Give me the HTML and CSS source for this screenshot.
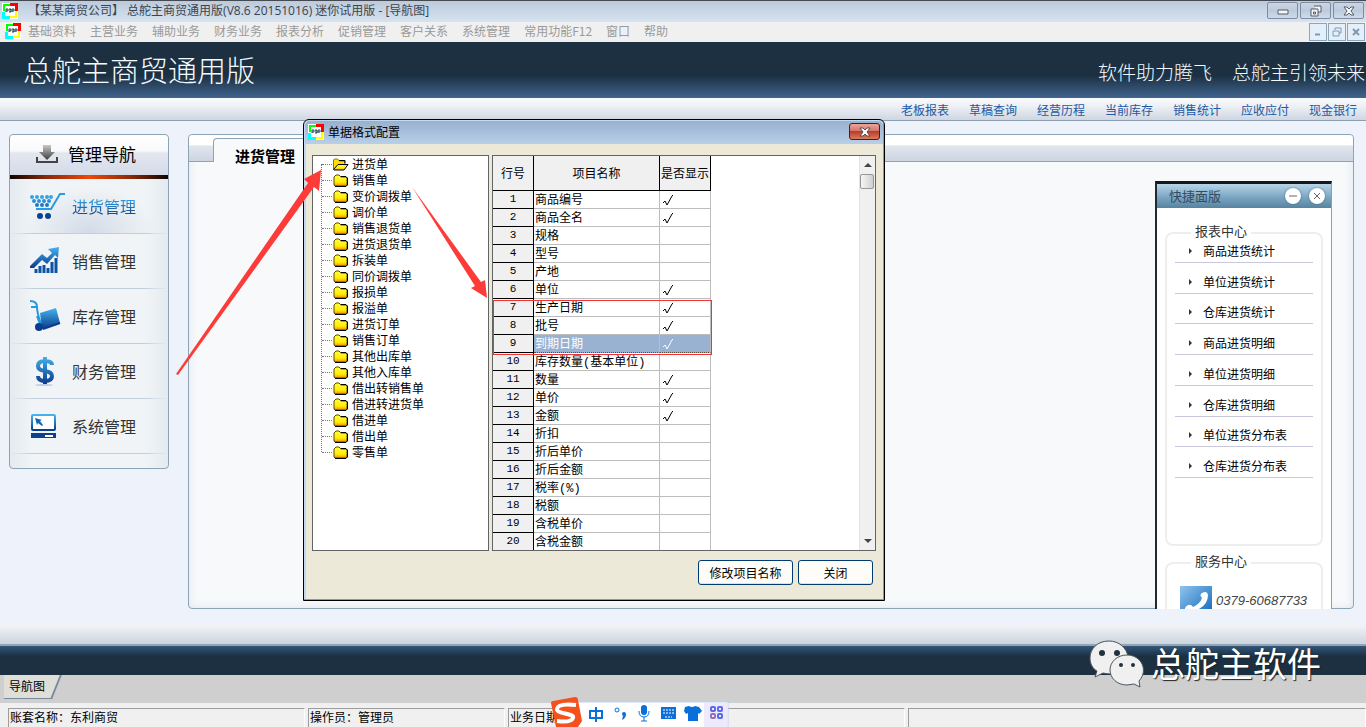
FILE: index.html
```html
<!DOCTYPE html>
<html lang="zh-CN">
<head>
<meta charset="utf-8">
<title>总舵主商贸通用版</title>
<link rel="stylesheet" href="styles.css">
</head>
<body>
<svg class="defs" aria-hidden="true">
  <defs>
    <linearGradient id="blue" x1="0" y1="0" x2="0" y2="1"><stop offset="0" stop-color="#45b4ee"/><stop offset="1" stop-color="#0a3a8c"/></linearGradient>
    <linearGradient id="dollar" gradientUnits="userSpaceOnUse" x1="0" y1="0" x2="0" y2="28"><stop offset="0" stop-color="#45b4ee"/><stop offset="1" stop-color="#0a3a8c"/></linearGradient>
    <linearGradient id="grey" x1="0" y1="0" x2="0" y2="1"><stop offset="0" stop-color="#c8c8c8"/><stop offset="1" stop-color="#3c3c3c"/></linearGradient>
    <linearGradient id="yellow" x1="0" y1="0" x2="0" y2="1"><stop offset="0" stop-color="#ffff40"/><stop offset=".65" stop-color="#ffee00"/><stop offset="1" stop-color="#f08a00"/></linearGradient>
    <symbol id="app" viewBox="0 0 16 16"><path fill="#fff" d="M0 0h16v16H0z"/><path fill="#0f0" d="M1 1h7v2H3v5H1z"/><path fill="#f00" d="M8 0h8v8h-3V3H8z"/><path fill="#ff0" d="M13 8h2v7H8v-2h5z"/><path fill="#0ff" d="M0 9h3v4h5v3H0z"/><path fill="none" stroke="#245" d="M4 9V6h2v2H4M8 6v3M7 9h2V6H7M10 9V6h2v2h-2"/></symbol>
    <symbol id="folder" viewBox="0 0 15 13"><path d="M1 3l2-2h3l2 2h5l1 1v7l-1 1H2l-1-1z" fill="url(#yellow)" stroke="#5d4a00"/><path d="M8 2.500h5l1.500 1.500v7L13 12.500H2" fill="none" stroke="#000"/></symbol>
    <symbol id="folder-open" viewBox="0 0 17 13"><path d="M1.500 11V2l1-1h3l2 2h5v2.500" fill="#ffe000" stroke="#a86a00"/><path d="M7 2.500h6v3" fill="none" stroke="#000"/><path d="M1.500 11.500L6 6.500h10L12 12H2z" fill="url(#yellow)" stroke="#000"/></symbol>
    <symbol id="restore" viewBox="0 0 14 12"><path d="M5 1h7v6H9" /><path d="M2 4h7v7H2zM4.500 7h2v2h-2z"/></symbol>
    <symbol id="tick" viewBox="0 0 11 12"><path d="M0 9l2-2 2 4 5-9 1-1" fill="none" stroke="currentColor"/></symbol>
  </defs>
</svg>

<header class="titlebar">
  <svg class="app-icon"><use href="#app"/></svg>
  <h1 class="window-title">【某某商贸公司】 总舵主商贸通用版(V8.6 20151016) 迷你试用版 - [导航图]</h1>
  <div class="window-buttons">
    <button aria-label="最小化"><svg width="14" height="12"><path d="M2 5h10v4H2z"/></svg></button>
    <button aria-label="还原"><svg width="14" height="12"><use href="#restore"/></svg></button>
    <button aria-label="关闭"><svg width="14" height="12"><path d="M2 2h3l2 2 2-2h3L9 6l3 4H9L7 8l-2 2H2l3-4z"/></svg></button>
  </div>
</header>

<nav class="menubar">
  <svg class="app-icon"><use href="#app"/></svg>
  <button>基础资料</button><button>主营业务</button><button>辅助业务</button><button>财务业务</button><button>报表分析</button><button>促销管理</button><button>客户关系</button><button>系统管理</button><button>常用功能F12</button><button>窗口</button><button>帮助</button>
  <div class="child-buttons">
    <button aria-label="最小化子窗口"><svg width="10" height="10"><path d="M2 7.500h5" stroke-width="2"/></svg></button>
    <button aria-label="还原子窗口"><svg width="10" height="10"><path d="M3 3V1h6v5H7M1 4h6v5H1z"/></svg></button>
    <button aria-label="关闭子窗口"><svg width="10" height="10"><path d="M2 2l6 6M8 2L2 8" stroke-width="2"/></svg></button>
  </div>
</nav>

<section class="banner">
  <p class="brand">总舵主商贸通用版</p>
  <p class="slogan"><span>软件助力腾飞</span><span>总舵主引领未来</span></p>
</section>

<nav class="quick-links">
  <a href="#">老板报表</a><a href="#">草稿查询</a><a href="#">经营历程</a><a href="#">当前库存</a><a href="#">销售统计</a><a href="#">应收应付</a><a href="#">现金银行</a>
</nav>

<main class="workspace">
  <aside class="sidebar">
    <h2 class="sidebar-head">
      <svg width="24" height="20"><path d="M8 1h8v7h4l-8 8-8-8h4z" fill="url(#grey)"/><path d="M2 13v5h20v-5" fill="none" stroke="#444" stroke-width="2"/></svg>
      管理导航
    </h2>
    <nav class="side-nav">
      <a class="active" href="#"><svg width="36" height="30"><g fill="#37a3e2"><circle cx="3" cy="6" r="2"/><circle cx="8" cy="6" r="2"/><circle cx="13" cy="6" r="2"/><circle cx="18" cy="6" r="2"/><circle cx="22" cy="6" r="2"/></g><g fill="#2b90d4"><circle cx="5" cy="10" r="2"/><circle cx="10" cy="10" r="2"/><circle cx="15" cy="10" r="2"/><circle cx="20" cy="10" r="2"/></g><g fill="#1f79c2"><circle cx="8" cy="14" r="2"/><circle cx="13" cy="14" r="2"/><circle cx="18" cy="14" r="2"/></g><path d="M7 18h15L31 3h5" fill="none" stroke="#299be0" stroke-width="2"/><g fill="#0a4292"><circle cx="11" cy="25" r="3"/><circle cx="19" cy="25" r="3"/></g></svg><span>进货管理</span></a>
      <a href="#"><svg width="36" height="30"><path d="M1 20L13 8l5 4 5-5-4-4 11-2-1 11-3-3-8 9-5-4-8 8H1z" fill="url(#blue)"/><path d="M7 27v-4M11 27v-7M15 27v-8M19 27v-5M23 27V16M27 27V12" stroke="#0b53a5" stroke-width="3"/></svg><span>销售管理</span></a>
      <a href="#"><svg width="36" height="34"><path d="M1 2q7 0 7 6T12 25M2 8h6M8 17l4 11" fill="none" stroke="#249be0" stroke-width="2"/><path d="M11 14l16-5 4 15-18 6z" fill="url(#blue)"/><circle cx="10" cy="28" r="4" fill="#0a3c8c"/><path d="M14 30l17-6" stroke="#0a3c8c" stroke-width="2"/></svg><span>库存管理</span></a>
      <a href="#"><svg width="36" height="30"><path d="M23 9q0-4-7-4t-7 5q0 4 7 5t7 5q0 5-7 5t-7-5M16 1v27" fill="none" stroke="url(#dollar)" stroke-width="4"/><ellipse cx="15" cy="29" rx="9" ry="1" fill="#b9cfe3"/></svg><span>财务管理</span></a>
      <a href="#"><svg width="36" height="30"><rect x="3" y="4" width="23" height="15" rx="1" fill="#fff" stroke="url(#blue)" stroke-width="2"/><path d="M6 7l7 2-2 1 3 4-1 1-4-3-1 2z" fill="#1167b5"/><path d="M2 22h25v5H2z" fill="#0b4194"/><path d="M16 25h8" stroke="#fff" stroke-width="2"/></svg><span>系统管理</span></a>
    </nav>
  </aside>

  <section class="panel">
    <div class="panel-tabs"><h2>进货管理</h2></div>
    <aside class="shortcut">
      <header class="shortcut-head"><h3>快捷面版</h3>
        <div class="shortcut-buttons"><button aria-label="收起"><svg width="12" height="12"><path d="M2 6h8"/></svg></button><button aria-label="关闭面版"><svg width="12" height="12"><path d="M3 3l6 6M9 3L3 9"/></svg></button></div>
      </header>
      <section class="group reports"><h4>报表中心</h4>
        <ul><li><a href="#">商品进货统计</a></li><li><a href="#">单位进货统计</a></li><li><a href="#">仓库进货统计</a></li><li><a href="#">商品进货明细</a></li><li><a href="#">单位进货明细</a></li><li><a href="#">仓库进货明细</a></li><li><a href="#">单位进货分布表</a></li><li><a href="#">仓库进货分布表</a></li></ul>
      </section>
      <section class="group service"><h4>服务中心</h4>
        <p class="phone"><svg width="32" height="32"><defs><linearGradient id="tel" x1="0" y1="0" x2="1" y2="1"><stop offset="0" stop-color="#8fc4ec"/><stop offset="1" stop-color="#0c64b8"/></linearGradient></defs><path fill="url(#tel)" d="M0 0h32v32H0z"/><path d="M22 7q5-3 6 2 0 10-11 15-7 2-12 1-1-4 3-6 3-1 5 2 7-3 9-9-3-3 0-5z" fill="#fff"/></svg><span>0379-60687733</span></p>
      </section>
    </aside>
  </section>
</main>

<div class="footer-glow"></div>
<div class="footer-band"></div>
<div class="tab-strip"><button class="page-tab">导航图</button></div>
<footer class="statusbar">
  <span class="account">账套名称：东利商贸</span><span class="operator">操作员：管理员</span><span class="date">业务日期</span><span class="blank"></span>
</footer>

<section class="dialog" role="dialog" aria-labelledby="dialog-title">
  <header class="dialog-head">
    <svg class="app-icon"><use href="#app"/></svg><h2 id="dialog-title">单据格式配置</h2>
    <button aria-label="关闭对话框"><svg width="14" height="12"><path d="M2 2h3l2 2 2-2h3L9 6l3 4H9L7 8l-2 2H2l3-4z"/></svg></button>
  </header>
  <div class="dialog-body">
    <ul class="tree">
      <li><svg><use href="#folder-open"/></svg>进货单</li>
      <li><svg><use href="#folder"/></svg>销售单</li>
      <li><svg><use href="#folder"/></svg>变价调拨单</li>
      <li><svg><use href="#folder"/></svg>调价单</li>
      <li><svg><use href="#folder"/></svg>销售退货单</li>
      <li><svg><use href="#folder"/></svg>进货退货单</li>
      <li><svg><use href="#folder"/></svg>拆装单</li>
      <li><svg><use href="#folder"/></svg>同价调拨单</li>
      <li><svg><use href="#folder"/></svg>报损单</li>
      <li><svg><use href="#folder"/></svg>报溢单</li>
      <li><svg><use href="#folder"/></svg>进货订单</li>
      <li><svg><use href="#folder"/></svg>销售订单</li>
      <li><svg><use href="#folder"/></svg>其他出库单</li>
      <li><svg><use href="#folder"/></svg>其他入库单</li>
      <li><svg><use href="#folder"/></svg>借出转销售单</li>
      <li><svg><use href="#folder"/></svg>借进转进货单</li>
      <li><svg><use href="#folder"/></svg>借进单</li>
      <li><svg><use href="#folder"/></svg>借出单</li>
      <li><svg><use href="#folder"/></svg>零售单</li>
    </ul>
    <div class="grid">
      <div class="grid-view">
      <table>
        <thead><tr><th class="num">行号</th><th class="name">项目名称</th><th class="show">是否显示</th></tr></thead>
        <tbody>
          <tr><th>1</th><td>商品编号</td><td><svg class="tick"><use href="#tick"/></svg></td></tr>
          <tr><th>2</th><td>商品全名</td><td><svg class="tick"><use href="#tick"/></svg></td></tr>
          <tr><th>3</th><td>规格</td><td></td></tr>
          <tr><th>4</th><td>型号</td><td></td></tr>
          <tr><th>5</th><td>产地</td><td></td></tr>
          <tr><th>6</th><td>单位</td><td><svg class="tick"><use href="#tick"/></svg></td></tr>
          <tr><th>7</th><td>生产日期</td><td><svg class="tick"><use href="#tick"/></svg></td></tr>
          <tr><th>8</th><td>批号</td><td><svg class="tick"><use href="#tick"/></svg></td></tr>
          <tr class="selected"><th>9</th><td>到期日期</td><td><svg class="tick"><use href="#tick"/></svg></td></tr>
          <tr><th>10</th><td>库存数量(基本单位)</td><td></td></tr>
          <tr><th>11</th><td>数量</td><td><svg class="tick"><use href="#tick"/></svg></td></tr>
          <tr><th>12</th><td>单价</td><td><svg class="tick"><use href="#tick"/></svg></td></tr>
          <tr><th>13</th><td>金额</td><td><svg class="tick"><use href="#tick"/></svg></td></tr>
          <tr><th>14</th><td>折扣</td><td></td></tr>
          <tr><th>15</th><td>折后单价</td><td></td></tr>
          <tr><th>16</th><td>折后金额</td><td></td></tr>
          <tr><th>17</th><td>税率(%)</td><td></td></tr>
          <tr><th>18</th><td>税额</td><td></td></tr>
          <tr><th>19</th><td>含税单价</td><td></td></tr>
          <tr><th>20</th><td>含税金额</td><td></td></tr>
        </tbody>
      </table>
      </div>
      <div class="scrollbar">
        <button aria-label="向上滚动"><svg width="8" height="4"><path d="M0 4l4-4 4 4z"/></svg></button>
        <span class="thumb"></span>
        <button class="down" aria-label="向下滚动"><svg width="8" height="4"><path d="M0 0h8L4 4z"/></svg></button>
      </div>
      <div class="row-frame"></div>
    </div>
  </div>
  <footer class="dialog-actions"><button class="rename">修改项目名称</button><button class="close">关闭</button></footer>
</section>

<svg class="arrows" width="500" height="380" aria-hidden="true"><g fill="#fd3c39"><path d="M176 374L308 183l-4-4 17-9-2 21-5-4L178 375z"/><path d="M412 187l69 95 4-2 2 18-16-10 4-2z"/></g></svg>

<div class="ime">
  <svg width="180" height="30">
    <path d="M10 5h168v26H10z" fill="#fff" stroke="#bcd3ee"/>
    <path d="M154 6h23v24h-23z" fill="#eee9fb"/>
    <path d="M1 6q0-2 2-2l22-4q3 0 3 3l4 21-4 6H6z" fill="#f4511e"/>
    <path d="M26 8Q8 6 7 12c-1 5 18 4 16 9q-2 5-16 3" fill="none" stroke="#fff" stroke-width="4"/>
    <g transform="translate(1 2)">
      <g fill="none" stroke="#0a6fdb" stroke-width="2"><path d="M39 12h12v7H39zM45 8v15"/><circle cx="66" cy="11" r="2" stroke-width="1"/></g>
      <g fill="#0a6fdb"><circle cx="73" cy="15" r="2"/><path d="M75 15q0 4-4 6l1-4z"/><rect x="90" y="6" width="6" height="10" rx="3"/><path d="M110 8h15v12h-15zM134 8l4-1q3 2 6 0l4 1 3 4-3 3-1-1v8h-10v-8l-2 1-2-3z"/></g>
      <path d="M88 12q0 6 5 6t5-6M93 18v4M90 22h6" fill="none" stroke="#0a6fdb" stroke-width="1"/>
      <path d="M112 11h11M112 14h11M114 18h7" stroke="#fff" stroke-dasharray="2 1"/>
      <g fill="none" stroke="#5a6be8" stroke-width="2"><rect x="160" y="8" width="4" height="4" rx="1"/><rect x="167" y="8" width="4" height="4" rx="1"/><rect x="160" y="15" width="4" height="4" rx="1" stroke="#9472b8"/><rect x="167" y="15" width="4" height="4" rx="1"/></g>
    </g>
  </svg>
</div>

<div class="watermark">
  <svg width="56" height="48"><g fill="#f0f0f0" stroke="#4d565d"><path d="M20 1C8 1 1 9 1 18c0 6 3 11 7 13l-2 6 8-4c18 4 26-6 25-16C38 8 30 1 20 1z"/><path d="M38 15c-10 0-17 7-17 15s7 15 17 15l7-1 6 3-1-6c10-11 2-26-12-26z"/></g><g fill="#22313f"><circle cx="13" cy="13" r="3"/><circle cx="28" cy="13" r="3"/><circle cx="32" cy="25" r="2"/><circle cx="44" cy="25" r="2"/></g></svg>
  <span>总舵主软件</span>
</div>
</body>
</html>
```
FILE: styles.css
```css
* { box-sizing: border-box; }
html { overflow: hidden; }
body {
  margin: 0;
  position: relative;
  height: 100vh;
  display: flex;
  flex-direction: column;
  overflow: hidden;
  background: #edf2fb;
  color: #000;
  font: 12px/16px "Noto Sans CJK SC", sans-serif;
}
h1, h2, h3, h4, p, ul { margin: 0; padding: 0; font-size: 12px; font-weight: 400; }
ul { list-style: none; }
button { margin: 0; padding: 0; border: 0; background: none; font: inherit; color: inherit; }
a { color: inherit; text-decoration: none; }
svg { flex: none; }
.defs { position: absolute; width: 0; height: 0; }
.app-icon { width: 16px; height: 16px; }

.titlebar {
  flex: none;
  display: flex;
  align-items: center;
  height: 22px;
  padding: 0 2px 2px;
  border-top: 1px solid #454a52;
  background: linear-gradient(#bccadb, #d6e3f0);
}
.window-title { flex: 1; margin-left: 10px; color: #3a444f; white-space: nowrap; font-family: "Open Sans", "Noto Sans CJK SC", sans-serif; }
.window-buttons { display: flex; gap: 2px; align-self: flex-start; padding-top: 1px; }
.window-buttons button {
  display: grid;
  place-items: center;
  width: 31px;
  height: 17px;
  border: 1px solid #7c8ca5;
  border-radius: 2px;
  background: linear-gradient(#cbd6e4, #bccadb 50%, #cfdbe9);
}
.window-buttons svg { fill: #f5f5f5; stroke: #535d6b; }

.menubar {
  flex: none;
  display: flex;
  align-items: center;
  gap: 14px;
  height: 20px;
  padding: 0 1px 2px 5px;
  background: #f0f0f0;
  color: #9a9a9a;
  white-space: nowrap;
}
.menubar .app-icon { margin-right: -7px; }
.child-buttons { display: flex; gap: 1px; margin-left: auto; padding-top: 1px; }
.child-buttons button { display: grid; place-items: center; width: 18px; height: 18px; border: 1px solid #8da5b8; background: #e3effb; }
.child-buttons svg { fill: none; stroke: #8599a9; }

.banner {
  flex: none;
  display: flex;
  justify-content: space-between;
  align-items: center;
  height: 56px;
  padding: 0 1px 0 23px;
  background: linear-gradient(#1c3042, #1c3042 60%, #40658f);
  color: #f4fbff;
  font-weight: 300;
  white-space: nowrap;
}
.brand { padding-bottom: 2px; font-size: 29px; line-height: 40px; font-weight: 300; }
.slogan { display: flex; gap: 20px; font-size: 19px; line-height: 30px; font-weight: 300; padding-top: 3px; }

.quick-links {
  flex: none;
  display: flex;
  justify-content: flex-end;
  align-items: center;
  gap: 20px;
  height: 23px;
  padding: 2px 9px 0 0;
  border-bottom: 1px solid #8ca0b2;
  background: linear-gradient(#fafbfc, #eceff4 40%, #cfd6e2);
  color: #2158a5;
}

.workspace { flex: 1; min-height: 0; display: flex; align-items: stretch; gap: 19px; padding: 13px 12px 17px 9px; }
.sidebar { flex: none; align-self: flex-start; width: 160px; padding-bottom: 14px; border: 1px solid #8da3b6; border-radius: 4px; background: linear-gradient(90deg, #e4eaf0, #f0f4f6 14%, #f0f4f6 86%, #e4eaf0); }
.sidebar-head {
  display: flex;
  align-items: center;
  gap: 9px;
  height: 44px;
  padding: 0 0 2px 25px;
  border-bottom: 4px solid;
  border-image: linear-gradient(90deg, #000, #8c2a08 25%, #f04808 50%, #8c2a08 75%, #000) 4;
  background: linear-gradient(#fff, #f8f9fb 40%, #e2e7ef 45%, #d5dce8);
  border-radius: 4px 4px 0 0;
  font-size: 17px;
  line-height: 24px;
}
.side-nav a {
  display: flex;
  align-items: center;
  gap: 7px;
  height: 55px;
  padding-left: 19px;
  border-bottom: 1px solid;
  border-image: linear-gradient(90deg, transparent, #c3cedb 15%, #c3cedb 85%, transparent) 1;
  font-size: 16px;
  line-height: 24px;
  color: #333;
}
.side-nav .active { background: radial-gradient(ellipse at 50% 100%, #d3dbe7, transparent 60%); }
.side-nav .active span { background: linear-gradient(#2f96da 30%, #174c91 80%); background-clip: text; color: transparent; }

.panel { flex: 1; min-width: 0; display: flex; flex-direction: column; border: 1px solid #8da3b6; border-radius: 4px; background: #f7f9fb; box-shadow: inset 0 0 8px #dde4ec; }
.panel-tabs { flex: none; height: 27px; padding-left: 24px; border-bottom: 1px solid #8da3b6; background: linear-gradient(#fff 38%, #e1e6ee 42%, #cdd5e1); border-radius: 4px 4px 0 0; }
.panel-tabs h2 { width: 112px; height: 24px; margin-top: 3px; padding-left: 21px; border: 1px solid #8da3b6; border-bottom: 0; border-radius: 4px 0 0 0; background: #f7f9fb; font-size: 15px; line-height: 34px; font-weight: 700; }
.shortcut { flex: 1; min-height: 0; align-self: flex-end; display: flex; flex-direction: column; width: 177px; margin: 19px 21px -1px 0; border: solid #9b9b9b; border-width: 3px 1px 0 2px; border-top-color: #15191d; border-left-color: #23292f; background: #fff; overflow: hidden; }
.shortcut-head { flex: none; display: flex; align-items: center; justify-content: space-between; height: 24px; padding: 0 6px 0 12px; background: linear-gradient(#b8d5e9, #7ba6c3 55%, #56839f); color: #344c5e; }
.shortcut-head h3 { font-size: 13px; line-height: 20px; }
.shortcut-buttons { display: flex; gap: 8px; }
.shortcut-buttons button { display: grid; place-items: center; width: 16px; height: 16px; border-radius: 50%; background: #fff; box-shadow: 0 0 2px #34617c; }
.shortcut-buttons svg { fill: none; stroke: #666; }
.group { margin: 24px 8px 0; border: 2px solid #eee; border-radius: 8px; }
.group h4 { width: 60px; margin: -13px 0 0 24px; padding-left: 4px; background: #fff; color: #333; font-size: 13px; line-height: 20px; }
.reports { flex: none; height: 314px; }
.reports ul { display: grid; grid-auto-rows: 1fr; height: 246px; margin: -9px 8px 0; }
.reports li { display: flex; align-items: flex-end; padding: 0 0 3px 12px; border-bottom: 1px solid #c8c8da; }
.reports li::before { content: ""; width: 0; height: 0; margin: 0 11px 5px 2px; border: solid transparent; border-width: 3px 0 3px 3px; border-left-color: #333; }
.service { flex: 1; min-height: 0; margin-top: 16px; border-bottom: 0; border-radius: 8px 8px 0 0; }
.phone { display: flex; gap: 4px; padding: 15px 0 0 13px; color: #444; font: italic 13px/16px "Liberation Sans", sans-serif; }
.phone span { padding-top: 7px; }

.footer-glow { flex: none; height: 20px; border-bottom: 2px solid #93a5b3; background: linear-gradient(#f1f2f5, #cbd4de); }
.footer-band { flex: none; height: 29px; background: linear-gradient(#32567a, #1c3042 35%); }
.tab-strip { flex: none; height: 28px; padding-left: 4px; background: #cfcfcf; }
.page-tab { position: relative; display: block; width: 53px; height: 24px; padding: 0 0 2px 4px; border-left: 1px solid #77749a; text-align: left; clip-path: inset(0 -8px 0 0); isolation: isolate; }
.page-tab::before { content: ""; position: absolute; z-index: -1; inset: 0 0 0 -8px; background: #dfdfd8; border: solid #77899b; border-width: 0 2px 1px 0; transform: skewX(-22deg); }
.statusbar { flex: none; display: flex; gap: 3px; height: 24px; padding: 5px 0 0 8px; background: #f0f0f0; white-space: nowrap; }
.statusbar span { padding-left: 1px; border: solid #9d9d9d; border-width: 1px 0 0 1px; border-right: 1px solid #fff; }
.account { width: 297px; }
.operator { width: 197px; }
.date { width: 397px; }
.blank { flex: 1; }

.dialog { position: absolute; left: 303px; top: 119px; width: 582px; border: 1px solid #000; border-radius: 6px 6px 0 0; background: #ece9d8; box-shadow: inset -1px -1px #39b9e0, inset 2px 2px #c3d9ef; padding: 1px 8px 15px; }
.dialog-head { display: flex; align-items: center; gap: 4px; height: 23px; margin: 0 -7px; padding: 0 3px 2px; background: linear-gradient(#97b1cf, #b9cfe7); border-radius: 5px 5px 0 0; }
.dialog-head h2 { flex: 1; }
.dialog-head button { display: grid; place-items: center; width: 31px; height: 17px; border: 1px solid #5b1715; border-radius: 3px; background: linear-gradient(#e9a597, #d5776a 45%, #b93d28 50%, #d87c5e); }
.dialog-head button svg { fill: #fff; stroke: #5b4c50; }
.dialog-body { display: flex; gap: 3px; margin-top: 11px; height: 396px; }
.tree { width: 177px; border: 1px solid #646464; background: #fff; position: relative; }
.tree li { display: flex; align-items: center; height: 16px; padding-left: 19px; }
.tree li svg { width: 17px; height: 13px; margin-right: 3px; }
.tree li::before { content: ""; width: 10px; margin-left: -10px; border-top: 1px dotted #777; }
.tree::before { content: ""; position: absolute; left: 8px; top: 8px; height: 288px; border-left: 1px dotted #777; }
.grid { position: relative; flex: 1; display: flex; border: 1px solid #646464; background: #fff; }
.grid-view { flex: 1; overflow: hidden; }
table { border-collapse: separate; border-spacing: 0; table-layout: fixed; width: 218px; line-height: 16px; }
th { padding: 0; background: #f0f0f0; border: solid #000; border-width: 0 1px 1px 0; font-weight: 400; }
thead th { height: 35px; white-space: nowrap; }
tbody th { padding-bottom: 1px; font-family: "Liberation Mono", monospace; font-size: 11px; }
td { height: 18px; padding: 3px 0 0 1px; border: solid #bdbdbd; border-width: 0 1px 1px 0; white-space: nowrap; font-family: "Liberation Mono", "Noto Sans CJK SC", sans-serif; line-height: 14px; }
td:last-child { padding: 0 0 0 3px; }
.tick { display: block; width: 11px; height: 12px; }
.num { width: 41px; }
.name { width: 126px; }
.show { width: 51px; }
.selected td { background: #9ab2d1; color: #fff; border-bottom: 1px dotted #5e4c38; }
.scrollbar { display: flex; flex-direction: column; width: 16px; background: #f0f0f0; border-left: 1px solid #e3e3e3; }
.scrollbar button { display: grid; place-items: center; height: 18px; }
.scrollbar svg { fill: #444; }
.thumb { height: 15px; margin-right: 1px; border: 1px solid #979797; border-radius: 2px; background: linear-gradient(90deg, #f5f5f5, #e3e3e3 50%, #cfcfcf); }
.scrollbar .down { margin-top: auto; }
.row-frame { position: absolute; left: 0; top: 144px; width: 219px; height: 55px; border: 1px solid #f03434; }
.dialog-actions { display: flex; justify-content: flex-end; gap: 5px; margin: 9px 3px 0 0; }
.dialog-actions button { height: 25px; border: 1px solid #003c74; border-radius: 3px; background: #fefcf9; box-shadow: inset 0 -1px #e2e0dc; }
.rename { width: 95px; }
.close { width: 75px; }

.arrows { position: absolute; left: 0; top: 0; pointer-events: none; }
.ime { position: absolute; left: 550px; bottom: 0; height: 30px; }
.watermark { position: absolute; right: 45px; bottom: 37px; display: flex; align-items: center; gap: 6px; color: #fff; font-size: 34px; line-height: 50px; text-shadow: 1px 1px 1px #222; white-space: nowrap; }
.watermark span { padding-bottom: 2px; }
```
